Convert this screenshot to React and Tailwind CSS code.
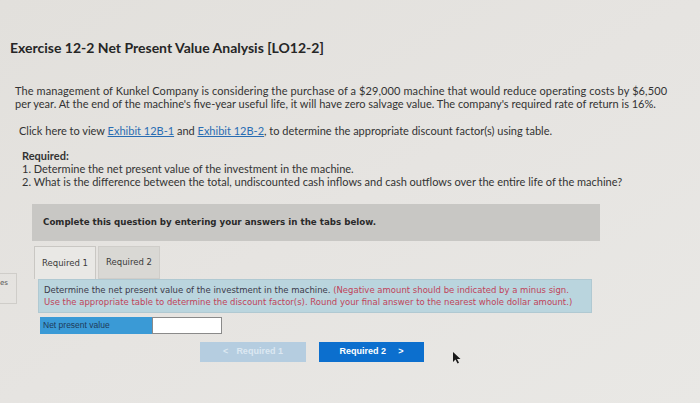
import React from 'react';

// Screen photo of an accounting exercise page
export default function App() {
    return (
        <div className="w-[700px] h-[403px] overflow-hidden bg-gradient-to-br from-[#e2e0dc] via-[#e6e4e1] to-[#e9e8e5] text-[#2b2b2b] font-['Lato','Liberation_Sans',sans-serif]">
            <div className="pt-[39px] pl-[10px]">
                <h1 className="text-[14px] leading-[18px] font-bold text-[#262626]">
                    Exercise 12-2 Net Present Value Analysis [LO12-2]
                </h1>
            </div>

            <div className="pl-[15px] pt-[27px] text-[11px] leading-[13px] text-[#333]">
                <p>
                    <span className="tracking-[0.1px]">The management of Kunkel Company is considering the purchase of a $29,000 machine that would reduce operating costs by $6,500</span>
                    <br />
                    per year. At the end of the machine's five-year useful life, it will have zero salvage value. The company's required rate of return is 16%.
                </p>
                <p className="pl-[4px] mt-[14px]">
                    Click here to view <span className="text-[#2a6db3] underline">Exhibit 12B-1</span> and <span className="text-[#2a6db3] underline">Exhibit 12B-2</span>, to determine the appropriate discount factor(s) using table.
                </p>
                <div className="pl-[7px] mt-[12px]">
                    <div className="font-bold">Required:</div>
                    <div>1. Determine the net present value of the investment in the machine.</div>
                    <div>2. What is the difference between the total, undiscounted cash inflows and cash outflows over the entire life of the machine?</div>
                </div>
            </div>

            <div className="ml-[32px] mt-[16px] w-[568px] h-[37px] bg-[#c8c7c4] flex items-center pl-[11px] font-['DejaVu_Sans',sans-serif] text-[8.7px] font-bold text-[#2a2a2a]">
                Complete this question by entering your answers in the tabs below.
            </div>

            <div className="flex mt-[5px]">
                <div className="w-[17px] pt-[27px]">
                    <div className="h-[31px] border-y border-r border-[#cfcdc9] flex items-start pt-[4px] text-[7px] text-[#555] font-['DejaVu_Sans',sans-serif]">
                        es
                    </div>
                </div>

                <div className="ml-[17px] font-['DejaVu_Sans',sans-serif]">
                    <div className="flex gap-[2px] text-[8.5px] text-[#3a3a3a]">
                        <div className="w-[62px] h-[33px] border border-[#c9c7c3] border-b-0 bg-[#e9e8e5] flex items-center justify-center">Required 1</div>
                        <div className="w-[62px] h-[33px] border border-[#cfcdc9] bg-[#d9d8d4] flex items-center justify-center">Required 2</div>
                    </div>

                    <div className="ml-[4px] w-[554px] h-[34px] bg-[#bad5de] border border-[#b0c9d2] pl-[5px] pt-[4px] text-[8.5px] leading-[12px] whitespace-nowrap">
                        <div>
                            <span className="text-[#3a3a4a]">Determine the net present value of the investment in the machine. </span>
                            <span className="text-[#c0445a]">(Negative amount should be indicated by a minus sign.</span>
                        </div>
                        <div className="text-[#c0445a]">
                            Use the appropriate table to determine the discount factor(s). Round your final answer to the nearest whole dollar amount.)
                        </div>
                    </div>

                    <div className="ml-[6px] mt-[4px] flex h-[17px] font-['Liberation_Sans',sans-serif] text-[8.5px]">
                        <div className="w-[112px] bg-[#3a9ad6] text-[#1e3a5a] flex items-center pl-[3px]">Net present value</div>
                        <div className="w-[70px] bg-white border border-[#8a8a8a]"></div>
                    </div>

                    <div className="flex mt-[8px] ml-[166px] gap-[13px] font-['Liberation_Sans',sans-serif] text-[9px] font-bold">
                        <div className="w-[106px] h-[20px] bg-[#b5cde0] text-[#dce8f2] flex items-center justify-center gap-[8px]">
                            <span>&lt;</span><span>Required 1</span>
                        </div>
                        <div className="w-[105px] h-[20px] bg-[#0c6fce] text-white flex items-center justify-center gap-[12px]">
                            <span>Required 2</span><span>&gt;</span>
                        </div>
                        <svg width="8" height="12" viewBox="0 0 8 12" className="ml-[16px] mt-[10px]">
                            <path d="M0 0 L0 10 L2.5 7.5 L4.5 11.5 L6 10.8 L4 7 L7.5 7 Z" fill="#1a1a1a" />
                        </svg>
                    </div>
                </div>
            </div>
        </div>
    );
}
